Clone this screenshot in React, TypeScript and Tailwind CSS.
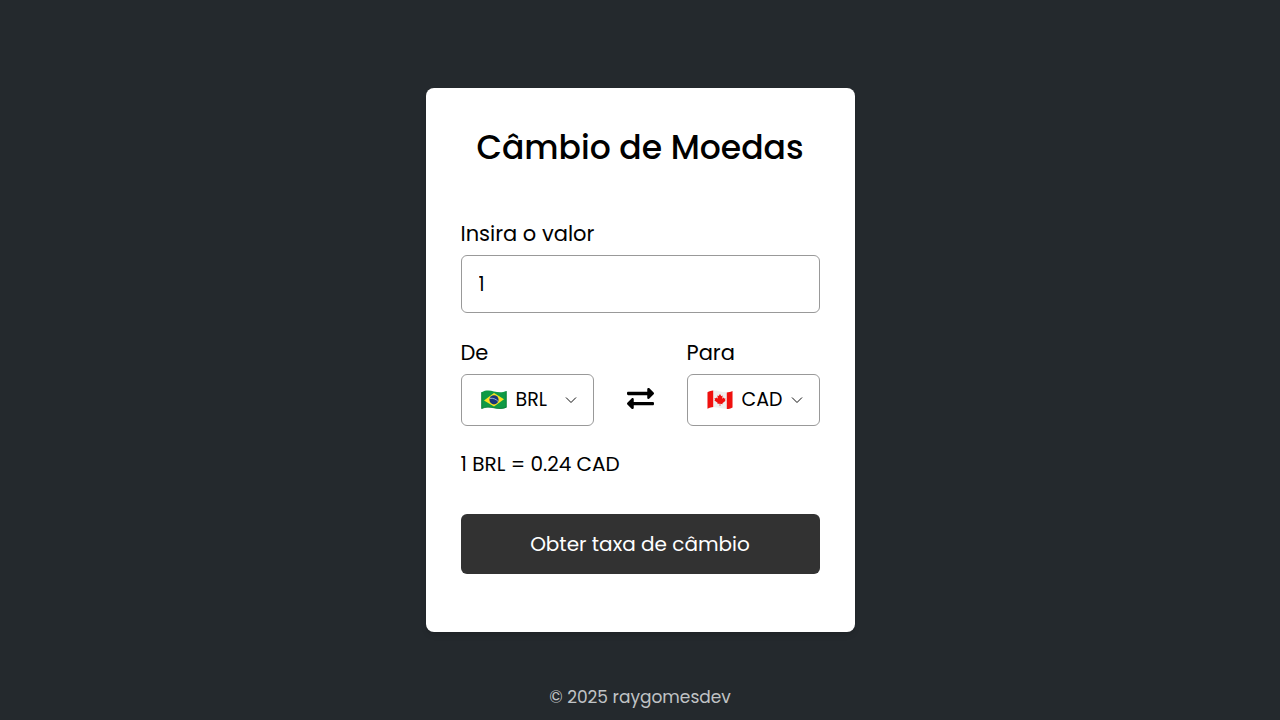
import React, { useId, useState } from 'react';
import { FaExchangeAlt } from 'react-icons/fa';

// BRL como base
const rates: Record<string, number> = {
  BRL: 1,
  CAD: 0.24,
  USD: 0.18,
};

const currencies = Object.keys(rates);

const BrazilFlag = () => (
  <svg viewBox="0 0 26 20" className="w-[26px] h-5" aria-hidden="true">
    <path d="M0.5 2.2C5-0.2 9 0.4 13 1.4S21 2.8 25.5 1V17.4C21 19.4 17 18.8 13 18S5 16.8 0.5 18.8Z" fill="#0f9a45" />
    <path d="M0.7 2.2V18.6M25.2 1.2V17.4M0.7 18.5C5 16.6 9 17 13 17.8S21 19 25.2 17.2" fill="none" stroke="#0b7a36" strokeWidth="0.8" />
    <path d="M3 10.4L13 3L23 9.2L13 16.4Z" fill="#fbe121" />
    <circle cx="13" cy="9.8" r="4.6" fill="#1a3578" />
    <path d="M8.8 8.4C12 7.8 15.4 9.2 17.2 11.6" fill="none" stroke="#b8cbe8" strokeWidth="0.8" />
  </svg>
);

const CanadaFlag = () => (
  <svg viewBox="0 0 26 20" className="w-[26px] h-5" aria-hidden="true">
    <path d="M0.5 2.2C5-0.2 9 0.4 13 1.4S21 2.8 25.5 1V17.4C21 19.4 17 18.8 13 18S5 16.8 0.5 18.8Z" fill="#efefef" />
    <path d="M0.5 2.2C2.6 1 4.4 0.6 6.2 0.5V17.1C4.4 17.2 2.6 17.7 0.5 18.8Z" fill="#f0100e" />
    <path d="M19.8 2.4C21.6 2.3 23.4 2 25.5 1V17.4C23.4 18.5 21.6 18.9 19.8 18.9Z" fill="#f0100e" />
    <path d="M13 4L14.3 6.2L15.6 5.6L15.2 8.8L16.8 7.6L17.2 8.6L18.5 8.5L18 10.2L18.6 10.8L15.4 13.2L15.6 14.2L13.3 13.8V16H12.7V13.7L10.4 13.8L10.6 12.8L7.4 10.4L8 9.8L7.5 8.1L8.8 8.3L9.2 7.4L10.8 8.6L10.4 5.4L11.7 6.1Z" fill="#f0100e" />
  </svg>
);

const UsaFlag = () => (
  <svg viewBox="0 0 26 20" className="w-[26px] h-5" aria-hidden="true">
    <path d="M0.5 2H25.5V18H0.5Z" fill="#f3f3f3" />
    <path d="M0.5 3.5H25.5M0.5 8H25.5M0.5 12.5H25.5M0.5 17H25.5" stroke="#d0202f" strokeWidth="2" />
    <path d="M0.5 2H12V11H0.5Z" fill="#24408e" />
  </svg>
);

const flags: Record<string, React.FC> = {
  BRL: BrazilFlag,
  CAD: CanadaFlag,
  USD: UsaFlag,
};

interface CurrencySelectProps {
  label: string;
  value: string;
  onChange: (value: string) => void;
}

const CurrencySelect: React.FC<CurrencySelectProps> = ({ label, value, onChange }) => {
  const id = useId();
  const Flag = flags[value];

  return (
    <div>
      <label htmlFor={id} className="block mb-[5px] text-[21px] leading-8">{label}</label>
      <div className="relative">
        <span className="absolute left-5 inset-y-0 flex items-center pointer-events-none">
          <Flag />
        </span>
        <select
          id={id}
          value={value}
          onChange={e => onChange(e.target.value)}
          className="block w-full h-[52px] pl-[54px] pr-7 bg-white border border-[#999] rounded-md text-[19px] appearance-none outline-none"
        >
          {currencies.map(c => <option key={c} value={c}>{c}</option>)}
        </select>
        <span className="absolute right-[17px] inset-y-0 flex items-center pointer-events-none">
          <svg viewBox="0 0 12 12" className="w-3 h-3" aria-hidden="true">
            <path d="M1 3.5L6 8.5L11 3.5" fill="none" stroke="#111" strokeWidth="1" />
          </svg>
        </span>
      </div>
    </div>
  );
};

const App: React.FC = () => {
  const [amount, setAmount] = useState("1");
  const [from, setFrom] = useState("BRL");
  const [to, setTo] = useState("CAD");
  const [result, setResult] = useState("1 BRL = 0.24 CAD");

  const handleSwap = () => {
    setFrom(to);
    setTo(from);
  };

  const handleSubmit = (e: React.FormEvent) => {
    e.preventDefault();
    const value = Number(amount) || 0;
    const total = (value * rates[to]) / rates[from];
    setResult(`${value} ${from} = ${total.toFixed(2)} ${to}`);
  };

  return (
    <div className="min-h-screen grid grid-rows-[1fr_auto_1fr] justify-items-center bg-[#24292d] text-black font-[Poppins,Inter,sans-serif]">
      <main className="row-start-2 w-full max-w-[429px] px-[35px] pt-10 pb-[58px] bg-white rounded-lg shadow-md">
        <h1 className="mb-[50px] text-center text-[33px] leading-10 font-medium">Câmbio de Moedas</h1>

        <form onSubmit={handleSubmit}>
          <label htmlFor="amount" className="block mb-[5px] text-[21px] leading-8">Insira o valor</label>
          <input
            id="amount"
            type="text"
            inputMode="decimal"
            value={amount}
            onChange={e => setAmount(e.target.value)}
            className="block w-full h-[58px] px-[17px] border border-[#999] rounded-md text-[19px] outline-none"
          />

          <div className="mt-6 grid grid-cols-[1fr_93px_1fr] items-end">
            <CurrencySelect label="De" value={from} onChange={setFrom} />
            <button type="button" onClick={handleSwap} aria-label="Inverter moedas" className="h-14 flex items-center justify-center cursor-pointer">
              <FaExchangeAlt className="w-[27px] h-[27px]" />
            </button>
            <CurrencySelect label="Para" value={to} onChange={setTo} />
          </div>

          <p className="mt-[22px] text-[20px] leading-8">{result}</p>

          <button type="submit" className="mt-[34px] w-full h-[60px] bg-[#323232] text-white rounded-md text-[20px] cursor-pointer">
            Obter taxa de câmbio
          </button>
        </form>
      </main>

      <footer className="row-start-3 self-end pb-[9px] text-[17px] leading-7 text-[#c0c3c5]">
        © 2025 raygomesdev
      </footer>
    </div>
  );
};

export default App;
